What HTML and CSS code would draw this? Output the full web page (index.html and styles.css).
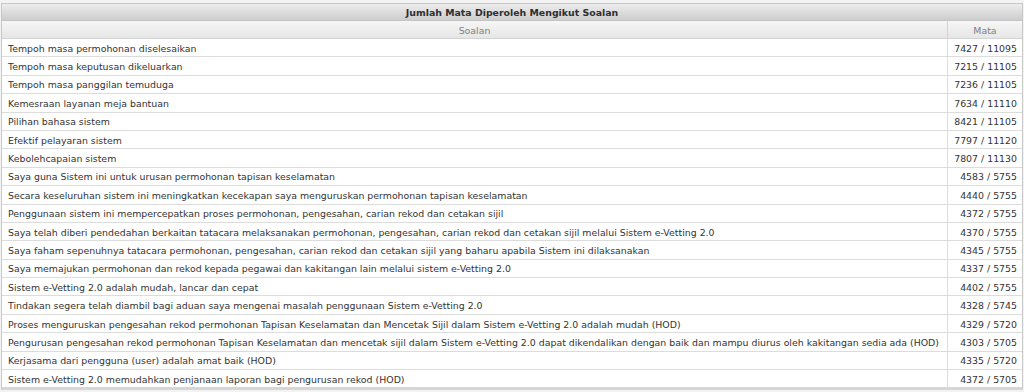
FILE: index.html
```html
<!DOCTYPE html>
<html lang="ms">

<head>
    <meta charset="UTF-8">
    <title>Jumlah Mata Diperoleh Mengikut Soalan</title>
    <link rel="stylesheet" href="styles.css">
</head>

<body>
    <div class="grid">
        <div class="grid-caption">Jumlah Mata Diperoleh Mengikut Soalan</div>
        <table class="grid-table">
            <thead>
                <tr>
                    <th class="col-soalan">Soalan</th>
                    <th class="col-mata">Mata</th>
                </tr>
            </thead>
            <tbody>
                <tr><td>Tempoh masa permohonan diselesaikan</td><td class="num">7427 / 11095</td></tr>
                <tr><td>Tempoh masa keputusan dikeluarkan</td><td class="num">7215 / 11105</td></tr>
                <tr><td>Tempoh masa panggilan temuduga</td><td class="num">7236 / 11105</td></tr>
                <tr><td>Kemesraan layanan meja bantuan</td><td class="num">7634 / 11110</td></tr>
                <tr><td>Pilihan bahasa sistem</td><td class="num">8421 / 11105</td></tr>
                <tr><td>Efektif pelayaran sistem</td><td class="num">7797 / 11120</td></tr>
                <tr><td>Kebolehcapaian sistem</td><td class="num">7807 / 11130</td></tr>
                <tr><td>Saya guna Sistem ini untuk urusan permohonan tapisan keselamatan</td><td class="num">4583 / 5755</td></tr>
                <tr><td>Secara keseluruhan sistem ini meningkatkan kecekapan saya menguruskan permohonan tapisan keselamatan</td><td class="num">4440 / 5755</td></tr>
                <tr><td>Penggunaan sistem ini mempercepatkan proses permohonan, pengesahan, carian rekod dan cetakan sijil</td><td class="num">4372 / 5755</td></tr>
                <tr><td>Saya telah diberi pendedahan berkaitan tatacara melaksanakan permohonan, pengesahan, carian rekod dan cetakan sijil melalui Sistem e-Vetting 2.0</td><td class="num">4370 / 5755</td></tr>
                <tr><td>Saya faham sepenuhnya tatacara permohonan, pengesahan, carian rekod dan cetakan sijil yang baharu apabila Sistem ini dilaksanakan</td><td class="num">4345 / 5755</td></tr>
                <tr><td>Saya memajukan permohonan dan rekod kepada pegawai dan kakitangan lain melalui sistem e-Vetting 2.0</td><td class="num">4337 / 5755</td></tr>
                <tr><td>Sistem e-Vetting 2.0 adalah mudah, lancar dan cepat</td><td class="num">4402 / 5755</td></tr>
                <tr><td>Tindakan segera telah diambil bagi aduan saya mengenai masalah penggunaan Sistem e-Vetting 2.0</td><td class="num">4328 / 5745</td></tr>
                <tr><td>Proses menguruskan pengesahan rekod permohonan Tapisan Keselamatan dan Mencetak Sijil dalam Sistem e-Vetting 2.0 adalah mudah (HOD)</td><td class="num">4329 / 5720</td></tr>
                <tr><td>Pengurusan pengesahan rekod permohonan Tapisan Keselamatan dan mencetak sijil dalam Sistem e-Vetting 2.0 dapat dikendalikan dengan baik dan mampu diurus oleh kakitangan sedia ada (HOD)</td><td class="num">4303 / 5705</td></tr>
                <tr><td>Kerjasama dari pengguna (user) adalah amat baik (HOD)</td><td class="num">4335 / 5720</td></tr>
                <tr><td>Sistem e-Vetting 2.0 memudahkan penjanaan laporan bagi pengurusan rekod (HOD)</td><td class="num">4372 / 5705</td></tr>
            </tbody>
        </table>
    </div>
</body>

</html>
```

FILE: styles.css
```css
body {
    margin: 0;
    padding: 3px 0 0 0;
    background: #f3f3f3;
    font-family: "DejaVu Sans", Verdana, sans-serif;
    font-size: 9.4px;
    color: #333;
}

.grid {
    width: 1020px;
    margin-left: 1px;
    border: 1px solid #c8c8c8;
    border-bottom: 3px solid #d6d6d6;
    background: #fff;
}

.grid-caption {
    height: 16px;
    line-height: 17px;
    text-align: center;
    font-weight: bold;
    color: #2e2e2e;
    background: linear-gradient(#ededed, #cdcdcd);
    border-bottom: 1px solid #c4c4c4;
}

.grid-table {
    width: 100%;
    border-collapse: collapse;
    table-layout: fixed;
}

.grid-table th {
    height: 16px;
    padding: 1px 0 0 0;
    font-weight: normal;
    color: #808080;
    background: linear-gradient(#f6f6f6, #e6e6e6);
    border-bottom: 1px solid #d3d3d3;
}

.grid-table .col-mata {
    width: 74px;
    border-left: 1px solid #d3d3d3;
}

.grid-table td {
    height: 16.4px;
    padding: 1px 0 0 6px;
    white-space: nowrap;
    overflow: hidden;
    border-bottom: 1px solid #dcdcdc;
}

.grid-table td.num {
    padding: 1px 5px 0 0;
    text-align: right;
    border-left: 1px solid #dcdcdc;
}

.grid-table tbody tr:last-child td {
    border-bottom: none;
}
```
